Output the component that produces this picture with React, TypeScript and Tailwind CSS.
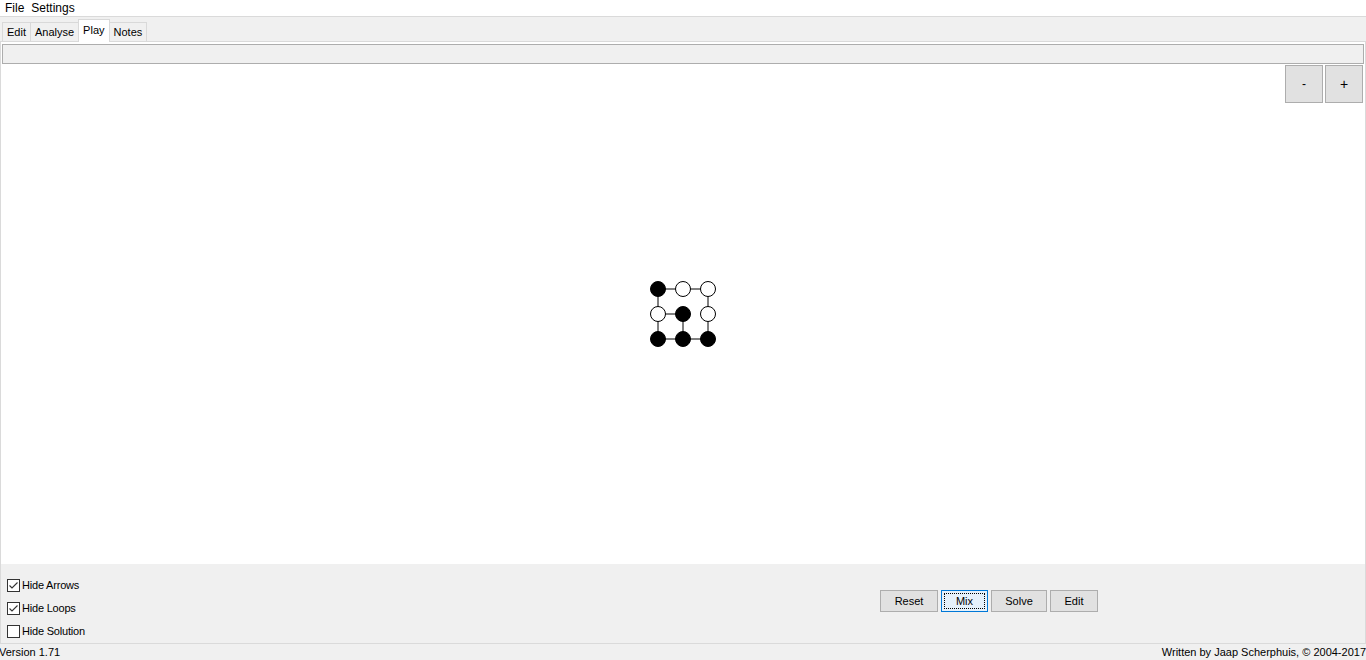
import React from 'react'

// Menu / tab / panel chrome of a small WinForms-style puzzle app

const tabs = ['Edit', 'Analyse', 'Play', 'Notes']

// grid of nodes: true = black, false = white
const nodes = [
  [true, false, false],
  [false, true, false],
  [true, true, true],
]

// links between nodes as [row, col, row, col]
const links = [
  [0, 0, 0, 1], [0, 1, 0, 2],
  [0, 0, 1, 0], [1, 0, 2, 0],
  [1, 0, 1, 1], [1, 1, 2, 1],
  [0, 2, 1, 2], [1, 2, 2, 2],
  [2, 0, 2, 1], [2, 1, 2, 2],
]

function Puzzle() {
  const pos = (i: number) => 10 + i * 25
  return (
    <svg width="70" height="70" viewBox="0 0 70 70">
      {links.map(([r1, c1, r2, c2], i) => (
        <line key={i} x1={pos(c1)} y1={pos(r1)} x2={pos(c2)} y2={pos(r2)} stroke="black" strokeWidth="1" />
      ))}
      {nodes.map((row, r) =>
        row.map((black, c) => (
          <circle key={`${r}-${c}`} cx={pos(c)} cy={pos(r)} r="7.5" fill={black ? 'black' : 'white'} stroke="black" strokeWidth="1" />
        ))
      )}
    </svg>
  )
}

function Checkbox({ label, checked }: { label: string; checked: boolean }) {
  return (
    <div className="flex items-center h-[13px] gap-[2px]">
      <div className="w-[13px] h-[13px] border border-[#333333] bg-white flex items-center justify-center">
        {checked && (
          <svg width="11" height="11" viewBox="0 0 11 11">
            <path d="M1.5 5.5 L4 8 L9.5 2.5" fill="none" stroke="#333333" strokeWidth="1.1" />
          </svg>
        )}
      </div>
      <span className="tracking-[-0.2px]">{label}</span>
    </div>
  )
}

function Button({ label, width, focused }: { label: string; width: string; focused?: boolean }) {
  return (
    <button
      className={
        focused
          ? `relative h-[22px] ${width} bg-[#e5f1fb] border border-[#0078d7] text-black`
          : `relative h-[22px] ${width} bg-[#e1e1e1] border border-[#adadad] text-black`
      }
    >
      {focused && <span className="absolute inset-[2px] border border-dotted border-black" />}
      {label}
    </button>
  )
}

export default function App() {
  return (
    <div
      className="w-[1366px] h-[660px] bg-[#f0f0f0] flex flex-col overflow-hidden text-[11px] text-black"
      style={{ fontFamily: '"Liberation Sans", Arial, sans-serif' }}
    >
      {/* Menu */}
      <div className="h-[17px] bg-white border-b border-[#dadada] flex items-center text-[12px] leading-none">
        <span className="ml-[5px]">File</span>
        <span className="ml-[7px]">Settings</span>
      </div>

      {/* Tabs */}
      <div className="h-[24px] flex items-end pl-[2px]">
        {tabs.map((t, i) =>
          t === 'Play' ? (
            <div key={t} className="h-[23px] -mb-px -ml-px px-[4px] bg-white border border-b-0 border-[#d9d9d9] flex items-start pt-[2px] relative z-10">
              {t}
            </div>
          ) : (
            <div
              key={t}
              className={
                i === 0
                  ? 'h-[19px] px-[4px] bg-[#f0f0f0] border border-b-0 border-[#d9d9d9] flex items-center pt-[1px]'
                  : 'h-[19px] -ml-px px-[4px] bg-[#f0f0f0] border border-b-0 border-[#d9d9d9] flex items-center pt-[1px]'
              }
            >
              {t}
            </div>
          )
        )}
      </div>

      {/* Tab page */}
      <div className="flex-1 flex flex-col border border-b-0 border-[#dadada] bg-white">
        <div className="mx-[1px] mt-[2px] h-[20px] bg-[#f0f0f0] border border-[#adadad]" />

        <div className="relative h-[500px] bg-white flex items-center justify-center">
          <Puzzle />
          <div className="absolute top-[1px] right-[2px] flex gap-[2px]">
            <button className="w-[38px] h-[38px] bg-[#e1e1e1] border border-[#adadad] text-[12px]">-</button>
            <button className="w-[38px] h-[38px] bg-[#e1e1e1] border border-[#adadad] text-[14px]">+</button>
          </div>
        </div>

        <div className="flex-1 bg-[#f0f0f0] flex border-b border-[#dadada]">
          <div className="w-[879px] pl-[6px] pt-[15px] flex flex-col gap-[10px]">
            <Checkbox label="Hide Arrows" checked />
            <Checkbox label="Hide Loops" checked />
            <Checkbox label="Hide Solution" checked={false} />
          </div>
          <div className="pt-[26px] flex gap-[3px]">
            <Button label="Reset" width="w-[58px]" />
            <Button label="Mix" width="w-[47px]" focused />
            <Button label="Solve" width="w-[56px]" />
            <Button label="Edit" width="w-[48px]" />
          </div>
        </div>
      </div>

      {/* Status bar */}
      <div className="h-[16px] flex items-center justify-between text-[11px] pt-[1px]">
        <span className="-ml-[1px]">Version 1.71</span>
        <span>Written by Jaap Scherphuis, © 2004-2017</span>
      </div>
    </div>
  )
}
